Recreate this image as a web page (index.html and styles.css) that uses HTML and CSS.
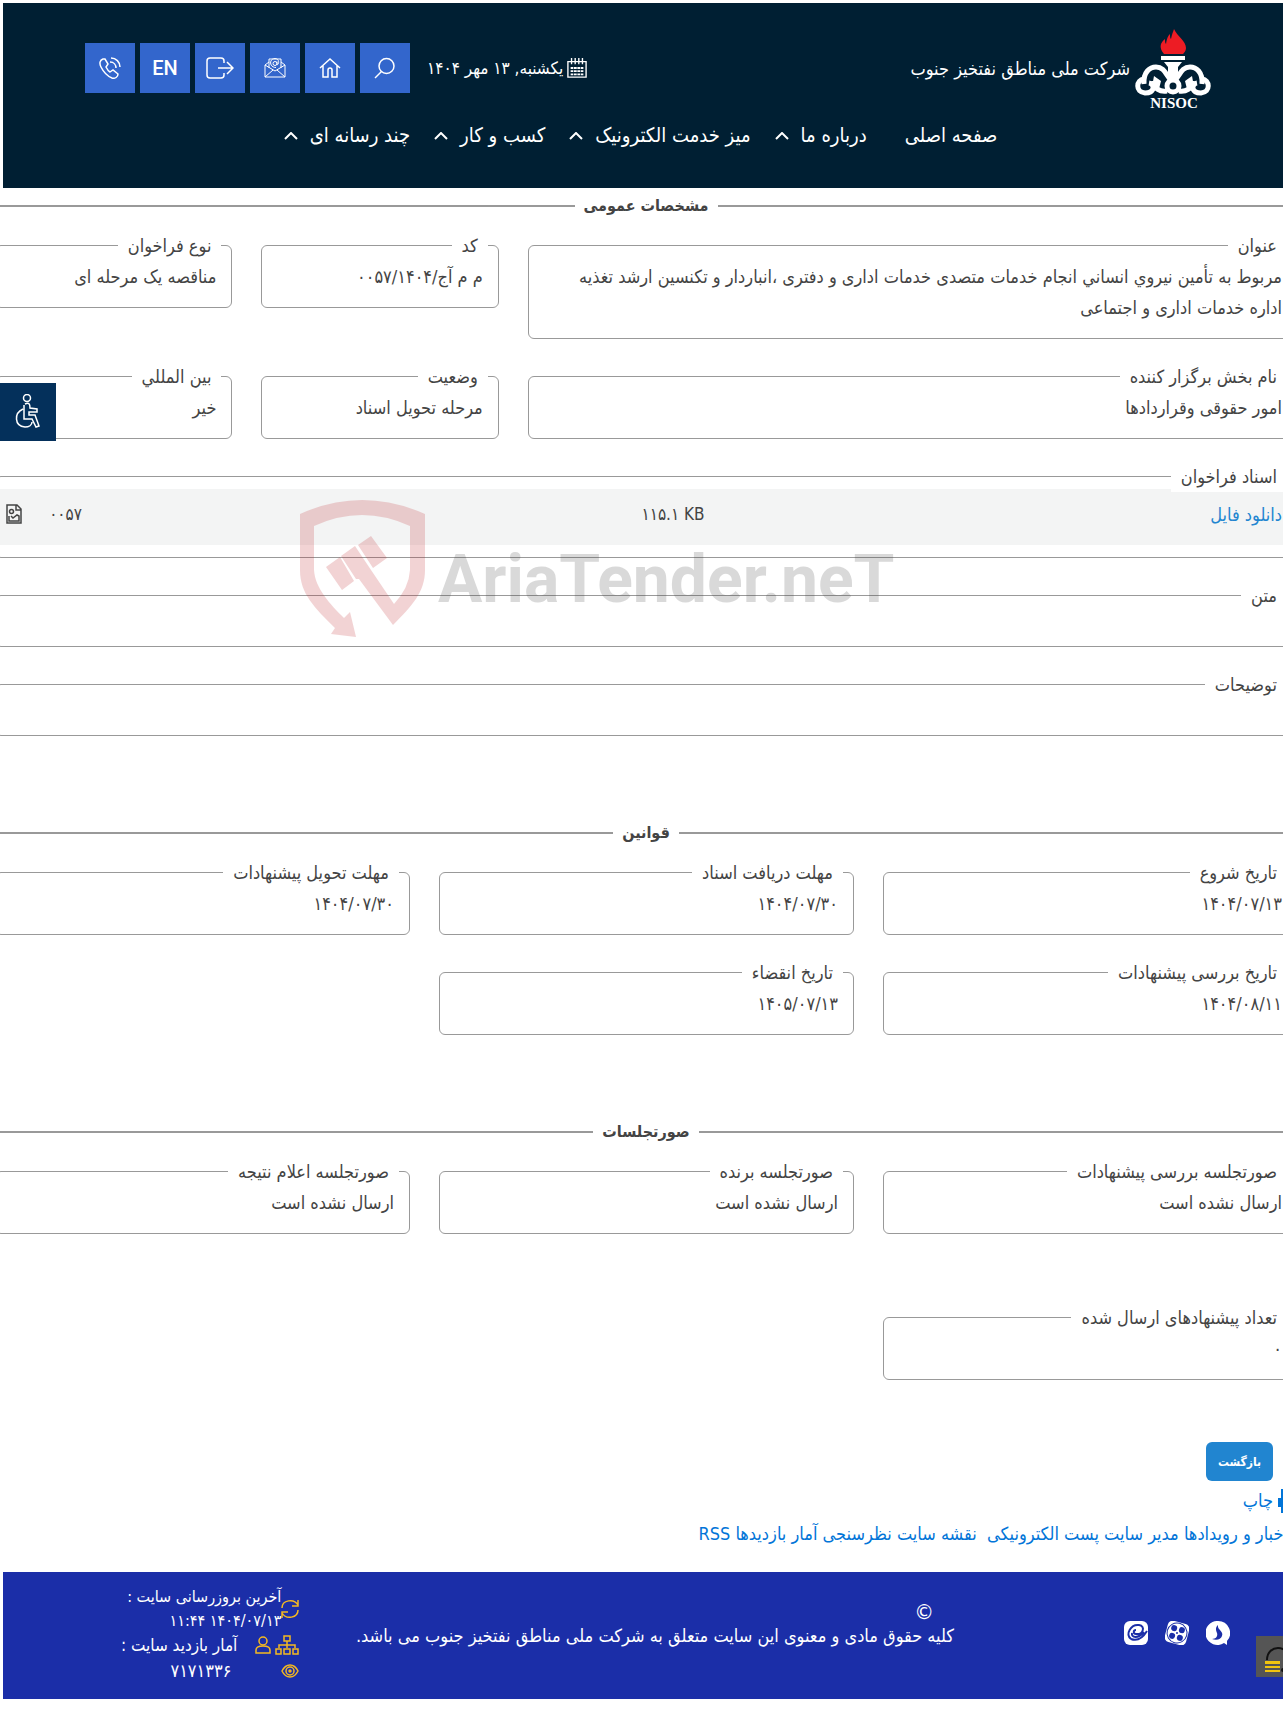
FILE: index.html
```html
<!DOCTYPE html>
<html lang="fa" dir="rtl">
<head>
  <meta charset="UTF-8">
  <meta name="viewport" content="width=device-width, initial-scale=1.0">
  <title>شرکت ملی مناطق نفتخیز جنوب</title>
  <link rel="stylesheet" href="styles.css">
</head>
<body>
<div class="page">

  <header class="header">
    <div class="header-top">
      <a href="#" class="logo">
        <svg class="logo-mark" viewBox="0 0 78 84" width="78" height="84">
          <path fill="#ed1c24" d="M30 28c-6-7-3-12 1-15 0 2 0 4 1 5 1-6 2-8 4-10 0 3 0 4 1 5 1-5 2-7 3-10 3 7 12 12 12 19 0 3-2 5-3 6z"/>
          <path fill="#fff" d="M27 30h24v4H27zM30 36h18l-4 5v12h-10V41z"/>
          <g fill="none" stroke="#fff" stroke-width="5">
            <path d="M10 58c-1-12 6-17 12-17 9 0 10 9 15 13"/>
            <path d="M68 58c1-12-6-17-12-17-9 0-10 9-15 13"/>
            <circle cx="39" cy="60" r="6"/>
            <path d="M10 53c-8 1-9 13 1 14 10 0 10-9 4-10M20 55c0 8 6 11 13 10"/>
            <path d="M68 53c8 1 9 13-1 14-10 0-10-9-4-10M58 55c0 8-6 11-13 10"/>
          </g>
          <path fill="#fff" d="M20 50l7 5-2 8-8 3zM58 50l-7 5 2 8 8 3z"/>
          <text x="40" y="82" class="logo-code">NISOC</text>
        </svg>
        <span class="logo-name">شرکت ملی مناطق نفتخیز جنوب</span>
      </a>

      <div class="tools">
        <div class="date">
          <svg viewBox="0 0 22 22" width="20" height="20" fill="none" stroke="#fff" stroke-width="1.5">
            <path d="M1 4h20v17H1zM5 0v7M9 0v7M13 0v7M17 0v7"/>
            <path d="M4 11h14M4 14.5h14M4 18h14" stroke-width="2" stroke-dasharray="3 .7"/>
          </svg>
          <span>یکشنبه, ۱۳ مهر ۱۴۰۴</span>
        </div>
        <div class="tool-list">
          <a href="#" class="tool" aria-label="جستجو">
            <svg viewBox="0 0 22 22" width="22" height="22"><circle cx="12.5" cy="9" r="7.5"/><path d="M7.500 14.500L1 21"/></svg>
          </a>
          <a href="#" class="tool" aria-label="خانه">
            <svg viewBox="0 0 22 22" width="22" height="22"><path d="M1 11L11 2l10 9M4 8v12h5v-7q0-2 2-2t2 2v7h5V8"/></svg>
          </a>
          <a href="#" class="tool" aria-label="پست الکترونیک">
            <svg class="thin" viewBox="0 0 22 22" width="22" height="22"><path d="M5 11V2h12v9M5 5L1 8v12h20V8l-4-3M1 8l10 6 10-6M1 20l8-7M21 20l-8-7"/><circle cx="11" cy="6.5" r="2"/><path d="M13 4.500v3c2 1 3-6-2-6-6 0-6 9 1 9"/></svg>
          </a>
          <a href="#" class="tool" aria-label="ورود">
            <svg viewBox="0 0 28 22" width="28" height="22"><path d="M18 6V4q0-3-3-3H4Q1 1 1 4v14q0 3 3 3h11q3 0 3-3v-2M12 11h15M21 5l6 6-6 6"/></svg>
          </a>
          <a href="#" class="tool">EN</a>
          <a href="#" class="tool" aria-label="تماس">
            <svg viewBox="0 0 22 22" width="22" height="22"><path d="M4 2C1 3 0 6 2 10c3 6 6 9 11 11 3 1 6-1 6-4l-5-4-3 2c-2-1-3-3-4-5l2-3-3-5zM12 1c5 0 9 4 9 9M11 5c4 0 6 3 6 6"/></svg>
          </a>
        </div>
      </div>
    </div>

    <nav class="nav">
      <a href="#" class="nav-link nav-home">صفحه اصلی</a>
      <a href="#" class="nav-link">درباره ما <svg viewBox="0 0 14 8" width="14" height="8"><path d="M1 7l6-6 6 6"/></svg></a>
      <a href="#" class="nav-link">میز خدمت الکترونیک <svg viewBox="0 0 14 8" width="14" height="8"><path d="M1 7l6-6 6 6"/></svg></a>
      <a href="#" class="nav-link">کسب و کار <svg viewBox="0 0 14 8" width="14" height="8"><path d="M1 7l6-6 6 6"/></svg></a>
      <a href="#" class="nav-link">چند رسانه ای <svg viewBox="0 0 14 8" width="14" height="8"><path d="M1 7l6-6 6 6"/></svg></a>
    </nav>
  </header>

  <main class="content">
    <section class="section">
      <h2 class="section-title">مشخصات عمومی</h2>
      <div class="row">
        <div class="col-60">
          <fieldset class="field">
            <legend>عنوان</legend>
            مربوط به تأمین نیروي انساني انجام خدمات متصدی خدمات اداری و دفتری ،انباردار و تکنسین ارشد تغذیه اداره خدمات اداری و اجتماعی
          </fieldset>
        </div>
        <div class="col-20">
          <fieldset class="field">
            <legend>کد</legend>
            م م آج/۰۰۵۷/۱۴۰۴
          </fieldset>
        </div>
        <div class="col-20">
          <fieldset class="field">
            <legend>نوع فراخوان</legend>
            مناقصه یک مرحله ای
          </fieldset>
        </div>
      </div>
      <div class="row">
        <div class="col-60">
          <fieldset class="field">
            <legend>نام بخش برگزار کننده</legend>
            امور حقوقی وقراردادها
          </fieldset>
        </div>
        <div class="col-20">
          <fieldset class="field">
            <legend>وضعیت</legend>
            مرحله تحویل اسناد
          </fieldset>
        </div>
        <div class="col-20">
          <fieldset class="field">
            <legend>بين المللي</legend>
            خیر
          </fieldset>
        </div>
      </div>
      <div class="row">
        <div class="col-100">
          <fieldset class="field field-files">
            <legend>اسناد فراخوان</legend>
            <table class="files">
              <tr>
                <td class="file-link"><a href="#">دانلود فایل</a></td>
                <td class="file-size" dir="ltr">۱۱۵.۱ KB</td>
                <td class="file-name">۰۰۵۷</td>
                <td class="file-icon">
                  <svg viewBox="0 0 16 20" width="16" height="20" fill="none" stroke="#444" stroke-width="1.5">
                    <path d="M1 1h10l4 4v14H1zM10 1v5h5"/><circle cx="5.5" cy="7.5" r="2"/><path d="M3 12v5h10v-5l-2-1-4 3-2-2"/>
                  </svg>
                </td>
              </tr>
            </table>
          </fieldset>
        </div>
      </div>
      <div class="row">
        <div class="col-100">
          <fieldset class="field field-empty">
            <legend>متن</legend>
          </fieldset>
        </div>
      </div>
      <div class="row">
        <div class="col-100">
          <fieldset class="field field-empty">
            <legend>توضیحات</legend>
          </fieldset>
        </div>
      </div>
    </section>

    <section class="section">
      <h2 class="section-title">قوانین</h2>
      <div class="row">
        <div class="col-33">
          <fieldset class="field">
            <legend>تاریخ شروع</legend>
            ۱۴۰۴/۰۷/۱۳
          </fieldset>
        </div>
        <div class="col-33">
          <fieldset class="field">
            <legend>مهلت دریافت اسناد</legend>
            ۱۴۰۴/۰۷/۳۰
          </fieldset>
        </div>
        <div class="col-33">
          <fieldset class="field">
            <legend>مهلت تحویل پیشنهادات</legend>
            ۱۴۰۴/۰۷/۳۰
          </fieldset>
        </div>
      </div>
      <div class="row">
        <div class="col-33">
          <fieldset class="field">
            <legend>تاریخ بررسی پیشنهادات</legend>
            ۱۴۰۴/۰۸/۱۱
          </fieldset>
        </div>
        <div class="col-33">
          <fieldset class="field">
            <legend>تاریخ انقضاء</legend>
            ۱۴۰۵/۰۷/۱۳
          </fieldset>
        </div>
      </div>
    </section>

    <section class="section">
      <h2 class="section-title">صورتجلسات</h2>
      <div class="row">
        <div class="col-33">
          <fieldset class="field">
            <legend>صورتجلسه بررسی پیشنهادات</legend>
            ارسال نشده است
          </fieldset>
        </div>
        <div class="col-33">
          <fieldset class="field">
            <legend>صورتجلسه برنده</legend>
            ارسال نشده است
          </fieldset>
        </div>
        <div class="col-33">
          <fieldset class="field">
            <legend>صورتجلسه اعلام نتیجه</legend>
            ارسال نشده است
          </fieldset>
        </div>
      </div>
    </section>

    <div class="row row-count">
      <div class="col-33">
        <fieldset class="field">
          <legend>تعداد پیشنهادهای ارسال شده</legend>
          ۰
        </fieldset>
      </div>
    </div>

    <div class="actions">
      <button type="button" class="back">بازگشت</button>
      <a href="#" class="print">
        <svg viewBox="0 0 20 24" width="20" height="24" fill="#0275d8"><path d="M3 0h14v9h3v9h-3v6H3v-6H0V9h3z"/></svg>
        چاپ
      </a>
      <div class="links">
        <a href="#">اخبار و رویدادها</a> <a href="#">مدیر سایت</a> <a href="#">پست الکترونیکی</a>&nbsp; <a href="#">نقشه سایت</a> <a href="#">نظرسنجی</a> <a href="#">آمار بازدیدها</a> <a href="#">RSS</a>
      </div>
    </div>
  </main>

  <footer class="footer">
    <div class="social">
      <a href="#" aria-label="سروش">
        <svg viewBox="0 0 24 24" width="24" height="24"><path fill="#fff" d="M12 0a12 12 0 1 0 6 22l3 2v-4A12 12 0 0 0 12 0z"/><path fill="#1b2ea8" d="M12 4c-1 5 6 6 4 11-1 3-5 5-10 3 4 0 6-3 5-6s-2-5 1-8z"/></svg>
      </a>
      <a href="#" aria-label="آپارات">
        <svg viewBox="0 0 24 24" width="24" height="24"><g transform="rotate(15 12 12)"><rect x="1" y="1" width="22" height="22" rx="5" fill="#fff"/><circle cx="12" cy="12" r="10" fill="none" stroke="#1b2ea8"/><g fill="#1b2ea8"><circle cx="8" cy="8" r="3"/><circle cx="16" cy="8" r="3"/><circle cx="8" cy="16" r="3"/><circle cx="16" cy="16" r="3"/><circle cx="12" cy="12" r="1"/></g></g></svg>
      </a>
      <a href="#" aria-label="ایتا">
        <svg viewBox="0 0 24 24" width="24" height="24"><rect width="24" height="24" rx="6" fill="#fff"/><path fill="none" stroke="#1b2ea8" stroke-width="2" d="M7 18c-6-5 0-15 8-14 7 1 4 10-3 9-3 0-3-4 0-4M7 18c5 2 11 0 16-8M8 12c-1 5 6 6 12-1"/></svg>
      </a>
    </div>

    <div class="copyright">
      <span class="copy-sign">©</span>
      <p>کلیه حقوق مادی و معنوی این سایت متعلق به شرکت ملی مناطق نفتخیز جنوب می باشد.</p>
    </div>

    <div class="stats">
      <div class="stat stat-update">
        <svg viewBox="0 0 18 20" width="18" height="20"><path d="M1 9c0-8 12-10 16-3M17 1v6h-6M17 11c0 8-12 10-16 3M1 19v-6h6"/></svg>
        <div>آخرین بروزرسانی سایت :<br>۱۴۰۴/۰۷/۱۳ ۱۱:۴۴</div>
      </div>
      <div class="stat stat-visits">
        <svg viewBox="0 0 24 20" width="24" height="20"><path d="M9 1h6v5H9zM12 6v7M4 13v-3h16v3M1 14h5v5H1zM9 14h6v5H9zM18 14h5v5h-5z"/></svg>
        <svg viewBox="0 0 16 18" width="16" height="18"><circle cx="8" cy="5" r="4"/><path d="M1 17v-3c0-3 3-4 7-4s7 1 7 4v3z"/></svg>
        <span>آمار بازدید سایت :</span>
      </div>
      <div class="stat stat-total">
        <svg viewBox="0 0 18 14" width="18" height="14"><path d="M1 7c4-8 12-8 16 0-4 8-12 8-16 0z"/><circle cx="9" cy="7" r="4"/><circle cx="9" cy="7" r="1"/></svg>
        <span>۷۱۷۱۳۳۶</span>
      </div>
    </div>
  </footer>

  <!-- floating buttons -->
  <button type="button" class="access" aria-label="دسترسی">
    <svg viewBox="0 0 26 34" width="26" height="34" fill="none" stroke="#fff" stroke-width="1.5"><circle cx="12" cy="4" r="3.5"/><path d="M10 10c4-2 5 0 5 4l7 1v3h-8v3h6l4 11-3 1-4-8H9V11M8 15c-9 4-9 17 2 18 4 0 7-2 7-5"/></svg>
  </button>
  <button type="button" class="lock" aria-label="قفل">
    <svg viewBox="0 0 26 28" width="26" height="28"><path d="M2 13C2-3 24-3 24 13" fill="none" stroke="#111" stroke-width="2"/><path fill="#f1c40f" d="M0 14h15v3H0zM0 19h15v2H0zM0 23h15v2H0z"/><circle cx="18" cy="23" r="2" fill="#111"/></svg>
  </button>

  <svg class="watermark" viewBox="0 0 600 140" width="600" height="140">
    <g fill="#c0272d">
      <path d="M0 14Q62-14 125 14V70C125 92 112 106 93 125L59 79h-3L41 56 55 46 71 70 94 104Q109 88 110 70V26Q62 4 14 26V70C15 88 30 104 44 118L50 112 56 137 31 134 35 128C15 108 0 94 0 70Z"/>
      <path d="M26 67L40 57 54 81 42 90zM58 45L71 36 87 58 73 68z"/>
    </g>
    <text x="138" y="102" class="watermark-text">AriaTender.neT</text>
  </svg>
</div>
</body>
</html>
```
FILE: styles.css
```css
* {
  box-sizing: border-box;
}

body {
  margin: 0;
  background: #fff;
  color: #444;
  font-family: "DejaVu Sans Condensed", "DejaVu Sans", sans-serif;
  font-size: 18px;
  line-height: 31px;
}

a {
  color: #0275d8;
  text-decoration: none;
}

.page {
  position: relative;
  overflow: hidden;
  padding: 3px 0 16px;
}

/* header */
.header {
  margin-left: 3px;
  padding: 23px 71px 37px 82px;
  background: #001f33;
  color: #fff;
}

.header-top {
  display: flex;
  justify-content: space-between;
  align-items: flex-start;
}

.logo {
  display: flex;
  align-items: center;
  gap: 4px;
  color: #fff;
}

.logo-mark {
  overflow: visible;
}

.logo-code {
  font-family: "Liberation Serif", serif;
  font-size: 15px;
  font-weight: bold;
  fill: #fff;
  text-anchor: middle;
}

.logo-name {
  font-size: 18px;
}

.tools {
  display: flex;
  gap: 17px;
  padding-top: 17px;
}

.date {
  display: flex;
  align-items: center;
  gap: 4px;
  height: 50px;
  font-size: 17px;
}

.tool-list {
  display: flex;
  gap: 5px;
}

.tool {
  display: flex;
  align-items: center;
  justify-content: center;
  width: 50px;
  height: 50px;
  background: #3366cc;
  color: #fff;
  font-family: Roboto, sans-serif;
  font-size: 20px;
  font-weight: 500;
}

.tool svg,
.nav-link svg {
  fill: none;
  stroke: #fff;
  stroke-width: 1.5;
}

.tool .thin {
  stroke-width: 1;
}

.nav {
  display: flex;
  justify-content: center;
  gap: 24px;
  padding: 10px 16px 0 0;
}

.nav-link {
  display: flex;
  align-items: center;
  gap: 12px;
  color: #fff;
  font-size: 20px;
}

.nav-link svg {
  stroke-width: 2;
}

.nav-home {
  margin-left: 14px;
}

/* tender details, wider than the window on both sides */
.content {
  margin: 0 -29px 0 -20px;
  padding-top: 2px;
}

.section {
  margin-bottom: 81px;
}

.section-title {
  display: flex;
  align-items: center;
  gap: 9px;
  margin: 0 0 9px;
  font-size: 16px;
  line-height: 31px;
}

.section-title::before,
.section-title::after {
  content: "";
  flex: 1;
  height: 2px;
  background: #999;
}

.row {
  display: flex;
  align-items: flex-start;
  margin-bottom: 22px;
}

.col-20,
.col-33,
.col-60,
.col-100 {
  padding: 0 14px 0 15px;
}

.col-20 { width: 20%; }
.col-33 { width: calc(100% / 3); }
.col-60 { width: 60%; }
.col-100 { width: 100%; }

.field {
  margin: 0;
  padding: 0 15px 15px;
  border: 1px solid #999;
  border-radius: 6px;
  min-width: 0;
}

.field legend {
  margin-right: -5px;
  padding: 0 10px;
  background: #fff;
}

.field-files {
  padding: 0 0 12px;
}

.field-files legend,
.field-empty legend {
  margin-right: 10px;
}

.field-files legend {
  position: relative;
  z-index: 1;
}

.field-empty {
  padding: 20px 0 15px;
}

.files {
  width: 100%;
  height: 56px;
  margin-top: -3px;
  border-collapse: collapse;
  table-layout: fixed;
  background: #f3f4f4;
}

.files td {
  padding: 0 15px 6px;
}

.files .file-link {
  width: 44%;
}

.files .file-link a {
  color: #2185d0;
}

.files .file-size {
  padding-right: 20px;
  text-align: right;
  font-size: 17px;
}

.files .file-name {
  width: 48px;
  padding: 0 0 6px;
  font-size: 17px;
}

.files .file-icon {
  width: 38px;
  padding: 0 12px 6px 0;
}

.file-icon svg {
  display: block;
}

.row-count {
  margin: 68px 0 0;
}

.section + .row-count {
  margin-top: -13px;
}

.actions {
  padding: 62px 39px 23px 0;
}

.back {
  display: block;
  height: 39px;
  padding: 0 12px;
  border: 0;
  border-radius: 6px;
  background: #2185d0;
  color: #fff;
  font-family: inherit;
  font-size: 12px;
  font-weight: bold;
}

.print {
  display: flex;
  align-items: center;
  gap: 5px;
  margin: 4px -25px 0 0;
}

.links {
  margin: 2px -15px 0 0;
}

/* footer */
.footer {
  display: flex;
  margin-left: 3px;
  height: 127px;
  padding: 0 53px 0 118px;
  background: #1b2ea8;
  color: #fff;
}

.social {
  display: flex;
  gap: 17px;
  padding-top: 49px;
}

.social svg,
.stat svg {
  display: block;
}

.copyright {
  flex: 1;
  padding: 28px 170px 0 0;
  line-height: 24px;
}

.copyright p {
  margin: 0;
  white-space: nowrap;
}

.copy-sign {
  display: block;
  margin-right: 20px;
  font-size: 22px;
}

.stats {
  padding-top: 13px;
}

.stat {
  display: flex;
  align-items: center;
  font-size: 16px;
  line-height: 24px;
}

.stat svg {
  fill: none;
  stroke: #f5b921;
  stroke-width: 1.5;
}

.stat-visits {
  gap: 4px;
  font-size: 17px;
}

.stat-visits span {
  margin-right: 14px;
}

.stat-total {
  gap: 50px;
  font-size: 18px;
  line-height: 28px;
}

/* floating over the page */
.access {
  position: absolute;
  top: 383px;
  left: 0;
  width: 56px;
  height: 58px;
  padding: 0;
  border: 0;
  background: #04305b;
}

.lock {
  position: absolute;
  right: -15px;
  bottom: 38px;
  width: 42px;
  height: 41px;
  padding: 9px 7px 0 9px;
  border: 0;
  background: #555;
}

.lock svg {
  display: block;
}

.watermark {
  position: absolute;
  top: 500px;
  left: 300px;
  opacity: 0.2;
  pointer-events: none;
  direction: ltr;
}

.watermark-text {
  font-family: Roboto, sans-serif;
  font-size: 66px;
  font-weight: bold;
  fill: #444;
}
```
